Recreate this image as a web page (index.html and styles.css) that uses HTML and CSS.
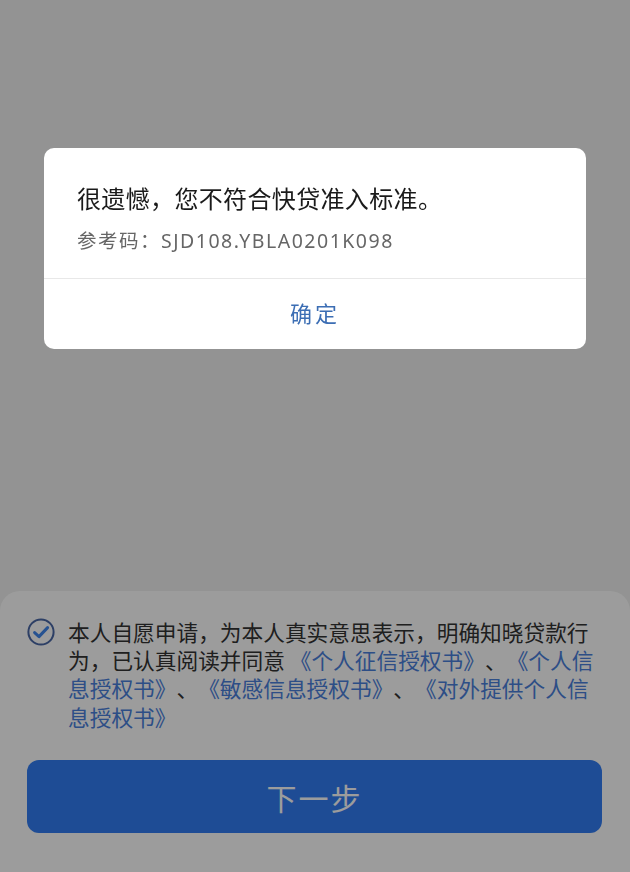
FILE: index.html
```html
<!DOCTYPE html>
<html lang="zh-CN">
<head>
  <meta charset="UTF-8">
  <title>快贷申请</title>
  <link rel="stylesheet" href="styles.css">
</head>
<body>

  <div class="page">
    <div class="sheet">
      <div class="agree">
        <svg class="check" width="28" height="28" viewBox="0 0 28 28">
          <circle cx="14" cy="14" r="12.6" fill="none" stroke="#4a68a6" stroke-width="2"/>
          <path d="M7.6 14.6 L12 18.6 L20.6 9.6" fill="none" stroke="#3f86ee" stroke-width="3" stroke-linecap="round" stroke-linejoin="round"/>
        </svg>
        <p class="agree-text">本人自愿申请，为本人真实意思表示，明确知晓贷款行为，已认真阅读并同意 <a href="#">《个人征信授权书》</a>、<a href="#">《个人信息授权书》</a>、<a href="#">《敏感信息授权书》</a>、<a href="#">《对外提供个人信息授权书》</a></p>
      </div>
      <button class="next-btn">下一步</button>
    </div>
  </div>

  <div class="mask">
    <div class="dialog">
      <div class="dialog-body">
        <div class="dialog-title">很遗憾，您不符合快贷准入标准。</div>
        <div class="dialog-code">参考码：SJD108.YBLA0201K098</div>
      </div>
      <div class="dialog-ok">确定</div>
    </div>
  </div>

</body>
</html>
```

FILE: styles.css
```css
body {
  margin: 0;
  font-family: "Noto Sans CJK SC", "Noto Sans", sans-serif;
  background: #f0f1f0;
}
.page {
  min-height: 100vh;
  display: flex;
  flex-direction: column;
  justify-content: flex-end;
}
.sheet {
  background: #fff;
  border-radius: 20px 20px 0 0;
  padding: 27px 28px 39px 27px;
}
.agree {
  display: flex;
  align-items: flex-start;
  gap: 13px;
}
.check {
  flex: none;
}
.agree-text {
  margin: 0;
  width: 535px;
  font-size: 21.7px;
  line-height: 28.3px;
  color: #333;
  text-spacing-trim: space-all;
}
.agree-text a {
  color: #4a80dc;
  text-decoration: none;
}
.next-btn {
  display: block;
  width: 100%;
  height: 73px;
  margin-top: 29px;
  border: none;
  border-radius: 12px;
  background: #317df3;
  color: #fff;
  font-family: inherit;
  font-size: 30px;
  letter-spacing: 2px;
}
.mask {
  position: fixed;
  inset: 0;
  background: rgba(0, 0, 0, 0.39);
  padding: 148px 44px 0;
}
.dialog {
  background: #fff;
  border-radius: 10px;
  overflow: hidden;
}
.dialog-body {
  padding: 33px 33px 23px;
  border-bottom: 1px solid #e8e8e8;
}
.dialog-title {
  font-size: 24px;
  line-height: 34px;
  color: #1a1a1a;
  letter-spacing: 0.35px;
}
.dialog-code {
  margin-top: 12px;
  font-family: "Noto Sans", "Noto Sans CJK SC", sans-serif;
  font-size: 19.5px;
  line-height: 28px;
  color: #666;
  letter-spacing: 1.5px;
}
.dialog-ok {
  height: 70px;
  line-height: 66px;
  text-align: center;
  font-size: 22px;
  color: #3c6eb4;
  letter-spacing: 3px;
}
```
